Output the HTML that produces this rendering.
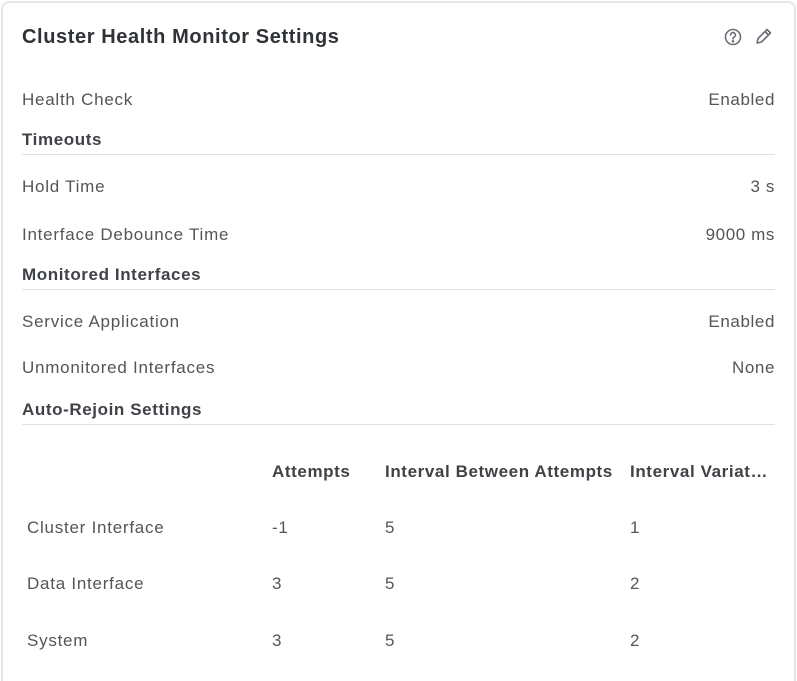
<!DOCTYPE html>
<html><head><meta charset="utf-8"><style>
html,body{margin:0;padding:0;background:#fff;width:797px;height:681px;overflow:hidden;}
body{position:relative;font-family:"Liberation Sans",sans-serif;color:#555;}
.card{position:absolute;left:1px;top:1px;width:795px;height:680px;border:2px solid #e3e6ea;border-bottom:none;border-radius:8px 8px 0 0;box-sizing:border-box;}
.t{position:absolute;font-size:17px;line-height:20px;white-space:nowrap;letter-spacing:0.75px;}
.r{right:22px;text-align:right;letter-spacing:0.6px;}
.h{font-weight:bold;color:#3f4247;letter-spacing:0.6px;}
.line{position:absolute;left:22px;right:22px;height:1px;background:#dfe2e5;}
</style></head><body>
<div class="card"></div>
<div class="t" style="left:22px;top:25px;font-size:20px;line-height:24px;font-weight:bold;color:#2f3236;letter-spacing:0.6px;">Cluster Health Monitor Settings</div>
<svg style="position:absolute;left:724px;top:28px" width="18" height="18" viewBox="0 0 18 18" fill="none" stroke="#6b6f75" stroke-width="1.6"><circle cx="9" cy="9" r="7.5"/><path d="M6.6 7a2.4 2.4 0 1 1 3.3 2.2c-.6.3-.9.7-.9 1.3v.5" stroke-linecap="round"/><circle cx="9" cy="13.3" r=".5" fill="#6b6f75"/></svg>
<svg style="position:absolute;left:754px;top:27px" width="19" height="19" viewBox="0 0 19 19" fill="none" stroke="#6b6f75" stroke-width="1.6" stroke-linejoin="round"><path d="M3 16l1-4.5L13 2.5l3.5 3.5-9 9z"/><path d="M11 4.5l3.5 3.5"/></svg>

<div class="t" style="left:22px;top:90px">Health Check</div><div class="t r" style="top:90px">Enabled</div>
<div class="t h" style="left:22px;top:130px">Timeouts</div><div class="line" style="top:154px"></div>
<div class="t" style="left:22px;top:177px">Hold Time</div><div class="t r" style="top:177px">3 s</div>
<div class="t" style="left:22px;top:225px">Interface Debounce Time</div><div class="t r" style="top:225px">9000 ms</div>
<div class="t h" style="left:22px;top:265px">Monitored Interfaces</div><div class="line" style="top:289px"></div>
<div class="t" style="left:22px;top:312px">Service Application</div><div class="t r" style="top:312px">Enabled</div>
<div class="t" style="left:22px;top:358px">Unmonitored Interfaces</div><div class="t r" style="top:358px">None</div>
<div class="t h" style="left:22px;top:400px">Auto-Rejoin Settings</div><div class="line" style="top:424px"></div>

<div class="t h" style="left:272px;top:462px">Attempts</div>
<div class="t h" style="left:385px;top:462px">Interval Between Attempts</div>
<div class="t h" style="left:630px;top:462px;width:140px;overflow:hidden;text-overflow:ellipsis">Interval Variation</div>

<div class="t" style="left:27px;top:518px">Cluster Interface</div><div class="t" style="left:272px;top:518px">-1</div><div class="t" style="left:385px;top:518px">5</div><div class="t" style="left:630px;top:518px">1</div>
<div class="t" style="left:27px;top:574px">Data Interface</div><div class="t" style="left:272px;top:574px">3</div><div class="t" style="left:385px;top:574px">5</div><div class="t" style="left:630px;top:574px">2</div>
<div class="t" style="left:27px;top:631px">System</div><div class="t" style="left:272px;top:631px">3</div><div class="t" style="left:385px;top:631px">5</div><div class="t" style="left:630px;top:631px">2</div>
</body></html>
